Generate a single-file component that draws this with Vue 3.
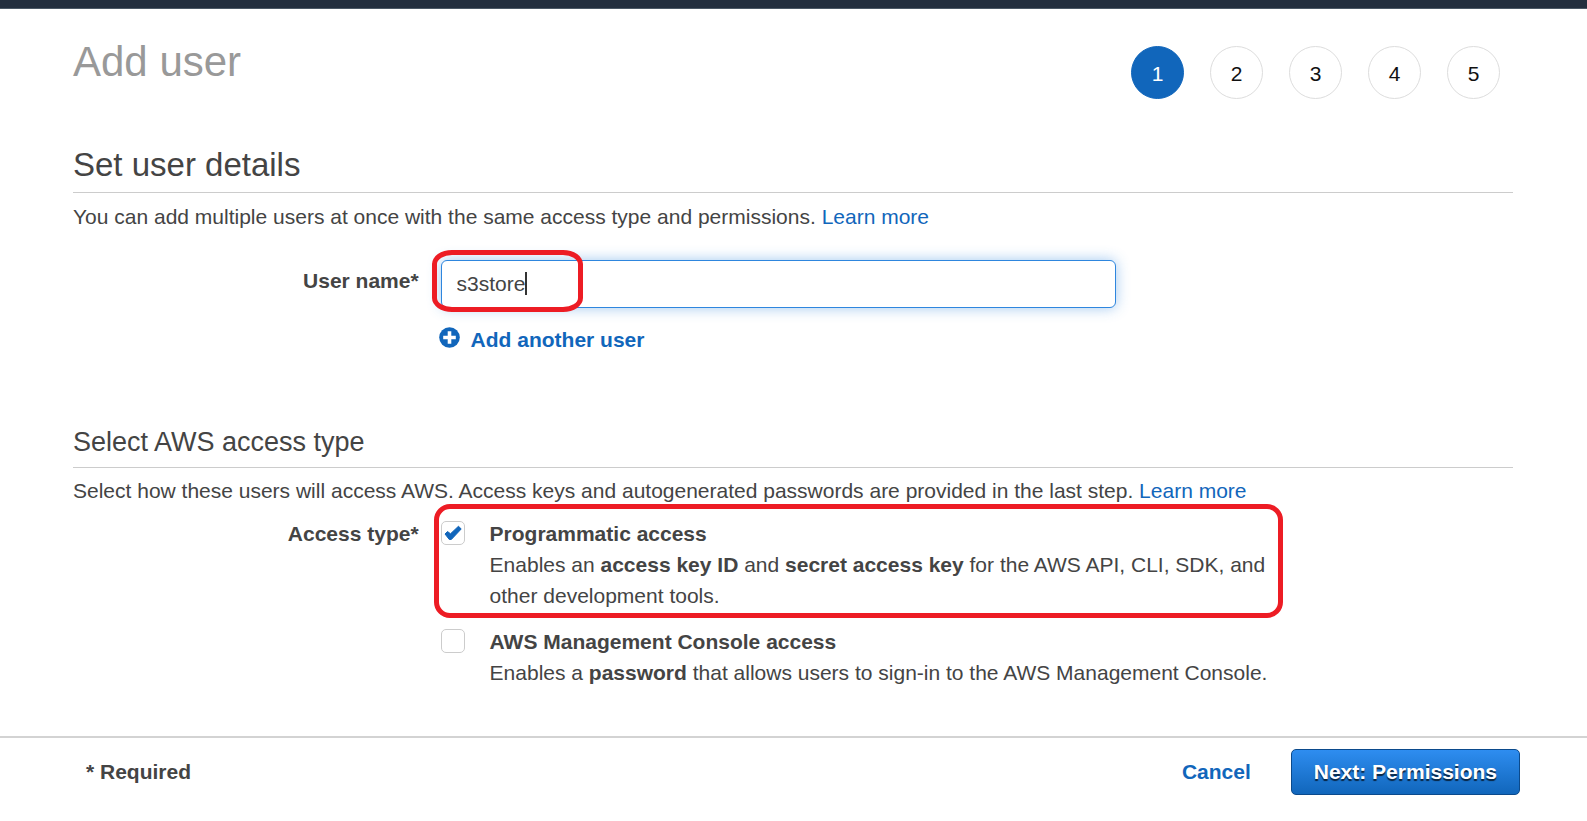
<script setup>
import { ref } from 'vue'

const steps = [1, 2, 3, 4, 5]
const current = ref(1)
const userName = ref('s3store')
const programmatic = ref(true)
const consoleAccess = ref(false)
</script>

<template>
  <div class="page">
    <div class="topbar"></div>
    <main class="content">
      <header class="head">
        <h1>Add user</h1>
        <ol class="steps">
          <li v-for="n in steps" :key="n" class="step" :class="{ active: n === current }">{{ n }}</li>
        </ol>
      </header>

      <section class="details">
        <h2>Set user details</h2>
        <p class="intro">
          You can add multiple users at once with the same access type and permissions.
          <a href="#">Learn more</a>
        </p>
        <div class="row name-row">
          <label class="label name-label" for="user-name">User name*</label>
          <div class="field">
            <div class="input-wrap">
              <input id="user-name" v-model="userName" type="text" autocomplete="off" spellcheck="false" />
              <span class="caret"></span>
              <span class="mark mark-name"></span>
            </div>
            <button type="button" class="add">
              <svg width="21" height="21" viewBox="0 0 21 21" aria-hidden="true">
                <circle cx="10.5" cy="10.5" r="10.3" fill="#1166bb" />
                <path d="M8.700 4.200h3.600v4.500h4.500v3.600h-4.500v4.500H8.700v-4.500H4.200V8.700h4.500z" fill="#fff" />
              </svg>
              <span>Add another user</span>
            </button>
          </div>
        </div>
      </section>

      <section class="access">
        <h3>Select AWS access type</h3>
        <p class="intro">
          Select how these users will access AWS. Access keys and autogenerated passwords are provided in the last step.
          <a href="#">Learn more</a>
        </p>
        <div class="row access-row">
          <div id="access-label" class="label">Access type*</div>
          <div class="options" role="group" aria-labelledby="access-label">
            <div class="option">
              <span class="box">
                <input id="programmatic" v-model="programmatic" type="checkbox" />
                <svg v-if="programmatic" class="tick" viewBox="0 0 24 24" aria-hidden="true">
                  <path d="M4 13L6.500 10.500L9.500 12.800L17.500 5.200L20.200 8L10.300 18.500H8.300z" />
                </svg>
              </span>
              <div class="text">
                <label for="programmatic">Programmatic access</label>
                <p>Enables an <b>access key ID</b> and <b>secret access key</b> for the AWS API, CLI, SDK, and other development tools.</p>
              </div>
              <span class="mark mark-option"></span>
            </div>
            <div class="option">
              <span class="box">
                <input id="console" v-model="consoleAccess" type="checkbox" />
                <svg v-if="consoleAccess" class="tick" viewBox="0 0 24 24" aria-hidden="true">
                  <path d="M4 13L6.500 10.500L9.500 12.800L17.500 5.200L20.200 8L10.300 18.500H8.300z" />
                </svg>
              </span>
              <div class="text">
                <label for="console">AWS Management Console access</label>
                <p>Enables a <b>password</b> that allows users to sign-in to the AWS Management Console.</p>
              </div>
            </div>
          </div>
        </div>
      </section>
    </main>

    <footer class="footer">
      <span class="required">* Required</span>
      <button type="button" class="cancel">Cancel</button>
      <button type="button" class="next">Next: Permissions</button>
    </footer>
  </div>
</template>

<style>
body {
  background: #fff;
}
</style>

<style scoped>
.page {
  min-height: 100vh;
  box-sizing: border-box;
  display: flex;
  flex-direction: column;
  font-family: "Liberation Sans", Arial, sans-serif;
  font-size: 21px;
  line-height: 31px;
  color: #444;
}
.page * {
  box-sizing: border-box;
}
.topbar {
  height: 9px;
  background: #232f3e;
  border-bottom: 1px solid #4b5966;
}
.content {
  flex: 1;
  padding: 0 74px 0 73px;
}
h1, h2, h3, p, ol {
  margin: 0;
  padding: 0;
  font-weight: 400;
}
.head {
  display: flex;
  justify-content: space-between;
  padding: 37px 13px 0 0;
  height: 130px;
}
h1 {
  font-size: 42px;
  line-height: 32px;
  color: #999;
}
.steps {
  display: flex;
  gap: 26px;
  list-style: none;
}
.step {
  width: 53px;
  height: 53px;
  border: 1px solid #ddd;
  border-radius: 50%;
  text-align: center;
  line-height: 53px;
  color: #111;
}
.step.active {
  background: #1166bb;
  border-color: #1166bb;
  color: #fff;
}
h2 {
  font-size: 33px;
  line-height: 52px;
  height: 54px;
  border-bottom: 1px solid #ccc;
}
h3 {
  font-size: 27px;
  line-height: 40px;
  height: 46px;
  border-bottom: 1px solid #ccc;
}
.intro {
  padding-top: 8px;
}
.access .intro {
  padding-top: 7px;
}
a {
  color: #1166bb;
  text-decoration: none;
}
.row {
  display: grid;
  grid-template-columns: 24% minmax(0, 1fr);
  column-gap: 22px;
}
.label {
  text-align: right;
  font-weight: 700;
}
.name-row {
  padding-top: 28px;
}
.name-label {
  padding-top: 5px;
}
.input-wrap {
  position: relative;
  max-width: 675px;
}
.input-wrap input {
  display: block;
  width: 100%;
  height: 48px;
  padding: 0 15px;
  border: 1px solid #2e86de;
  border-radius: 6px;
  background: #fff;
  box-shadow: 0 0 14px rgba(46, 134, 222, 0.45);
  font: inherit;
  color: #444;
  outline: none;
}
.caret {
  position: absolute;
  left: 84px;
  top: 12px;
  width: 2px;
  height: 23px;
  background: #333;
}
.mark {
  position: absolute;
  border: 5px solid #ed1c24;
  pointer-events: none;
}
.mark-name {
  left: -9px;
  top: -10px;
  width: 151px;
  height: 62px;
  border-radius: 20px / 14px;
}
.add {
  display: flex;
  gap: 11px;
  margin-top: 16px;
  margin-left: -2px;
  padding: 0;
  border: 0;
  background: none;
  font: inherit;
  font-weight: 700;
  color: #1166bb;
}
.add svg {
  margin-top: 3px;
}
.access {
  padding-top: 67px;
}
.access-row {
  padding-top: 12px;
}
.options {
  display: flex;
  flex-direction: column;
  gap: 15px;
}
.option {
  position: relative;
  display: flex;
  gap: 25px;
  max-width: 833px;
}
.box {
  position: relative;
  flex: none;
  width: 24px;
  height: 24px;
  margin-top: 3px;
}
.box input {
  appearance: none;
  display: block;
  width: 24px;
  height: 24px;
  margin: 0;
  border: 1px solid #ccc;
  border-radius: 5px;
  background: #fff;
}
.tick {
  position: absolute;
  inset: 0;
  pointer-events: none;
  fill: #1166bb;
  stroke: #1166bb;
  stroke-width: 1px;
  stroke-linejoin: round;
}
.text label {
  display: block;
  font-weight: 700;
}
.mark-option {
  left: -7px;
  top: -14px;
  right: -9px;
  bottom: -7px;
  border-radius: 16px;
}
.footer {
  display: flex;
  align-items: center;
  height: 85px;
  padding: 0 67px 16px 86px;
  border-top: 2px solid #d3d3d3;
  font-weight: 700;
}
.cancel {
  margin-left: auto;
  margin-right: 40px;
  padding: 0;
  border: 0;
  background: none;
  font: inherit;
  color: #1166bb;
}
.next {
  height: 46px;
  padding: 0 22px;
  border: 1px solid #0b4a8c;
  border-radius: 5px;
  background: linear-gradient(#2e8df0, #1166bb);
  font: inherit;
  color: #fff;
  text-shadow: 0 2px 1px rgba(0, 0, 0, 0.7);
}
</style>
